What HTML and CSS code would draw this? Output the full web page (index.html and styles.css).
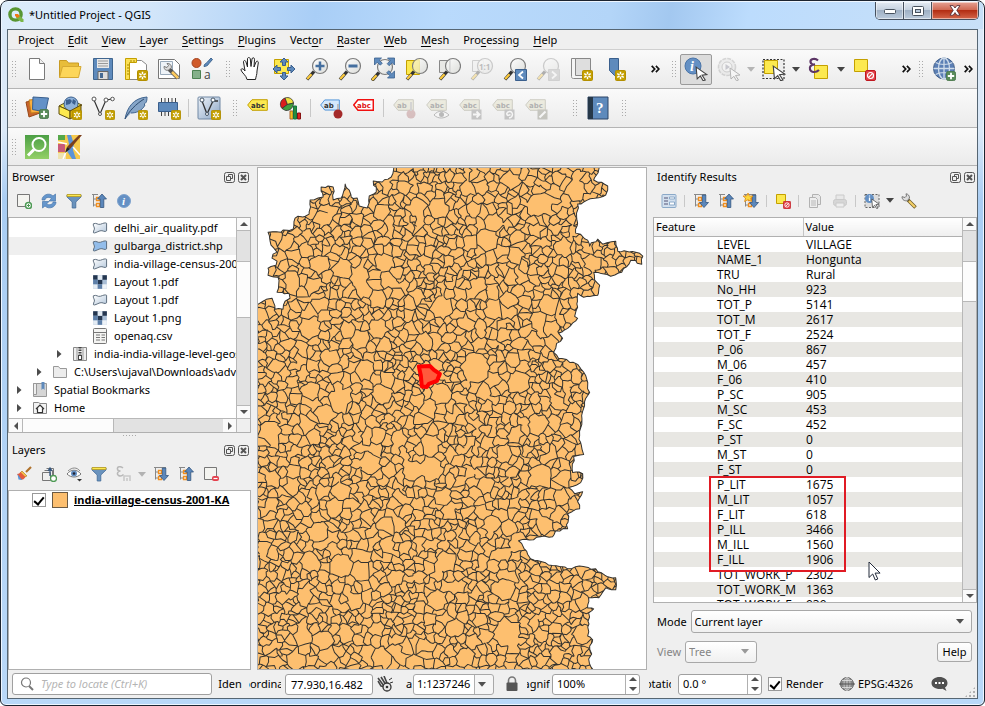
FILE: index.html
```html
<!DOCTYPE html>
<html lang="en">
<head>
<meta charset="utf-8">
<title>*Untitled Project - QGIS</title>
<link rel="stylesheet" href="styles.css">
</head>
<body>
<svg class="defs" aria-hidden="true">
  <defs>
    <linearGradient id="glass" x1="0" y1="0" x2="1" y2="1"><stop offset="0" stop-color="#fff"/><stop offset="1" stop-color="#d8d9d5"/></linearGradient>
    <linearGradient id="poly" x1="0" y1="0" x2="1" y2="1"><stop offset="0" stop-color="#fff"/><stop offset="1" stop-color="#b5c8dc"/></linearGradient>
    <linearGradient id="panel" x1="0" y1="0" x2="1" y2="1"><stop offset="0" stop-color="#eef3f9"/><stop offset="1" stop-color="#8ba6c6"/></linearGradient>
    <linearGradient id="green" x1="0" y1="0" x2="0" y2="1"><stop offset="0" stop-color="#4c9f45"/><stop offset="1" stop-color="#93d067"/></linearGradient>
  </defs>
  <symbol id="star" viewBox="0 0 11 11"><rect x=".5" y=".5" width="10" height="10" rx="1" fill="#c4a000" stroke="#b38f00"/><path d="M5.5 1.8v7.4M2.2 3.6l6.6 3.8M2.2 7.4l6.6-3.8" stroke="#fff" stroke-width="1.5"/><circle cx="5.500" cy="5.500" r="1.200" fill="#c4a000"/></symbol>
  <symbol id="plus" viewBox="0 0 11 11"><rect x=".5" y=".5" width="10" height="10" rx="2" fill="#5a8c5a" stroke="#48774a"/><path d="M5.500 2v7M2 5.500h7" stroke="#fff" stroke-width="2"/></symbol>
  <symbol id="mag" viewBox="0 0 24 24"><path d="M9 14.500L2 22.500" stroke="#333" stroke-width="3.400"/><path d="M6.500 17.200L2.200 22" stroke="#fcca3c" stroke-width="2.200"/><circle cx="15" cy="9" r="7.500" fill="url(#glass)" fill-opacity=".85" stroke="#7c7c7c" stroke-width="1.200"/></symbol>
  <symbol id="cursor" viewBox="0 0 12 14"><path d="M1 1l10 7-4.500.5 3 4.500-2 .8-2.600-4.500L2 12z" fill="#fff" stroke="#444" stroke-width="1"/></symbol>
  <symbol id="pointer" viewBox="0 0 13 20"><path d="M1 1v15.500l3.700-3.500 2.600 6 2.500-1-2.700-5.900h5z" fill="#fff" stroke="#222a3a"/></symbol>
  <symbol id="tag" viewBox="0 0 21 12"><path d="M.700 6L5 .700h15.300v10.600H5z"/></symbol>
  <symbol id="caret" viewBox="0 0 8 5"><path d="M0 0h8L4 4.800z" fill="currentColor"/></symbol>
  <symbol id="more" viewBox="0 0 9 8"><path d="M.700.800L3.700 4l-3 3.200M4.900.800L7.900 4l-3 3.200" fill="none" stroke="#111" stroke-width="1.700"/></symbol>
  <symbol id="float" viewBox="0 0 11 11"><rect x=".5" y=".5" width="10" height="10" rx="2" fill="none" stroke="#555"/><path d="M2.500 4.500h4v4h-4zM4.500 4V2.500h4v4H7" fill="none" stroke="#555"/></symbol>
  <symbol id="close" viewBox="0 0 11 11"><rect x=".5" y=".5" width="10" height="10" rx="2" fill="none" stroke="#555"/><path d="M3 3l5 5M8 3L3 8" stroke="#555" stroke-width="2"/></symbol>
  <symbol id="treeup" viewBox="0 0 16 16"><path d="M1 1.500h6M2.500 1.500v12M2.500 6H6M2.500 12H6" fill="none" stroke="#888"/><path d="M5.500 4.500h3v3h-3zM5.500 10.500h3v3h-3z" fill="none" stroke="#f28e1c" stroke-width="1.300"/><path d="M11 1l4.500 5h-2.700v8.500H9.300V6H6.500z" fill="#5b87bb" stroke="#34567e" stroke-width=".8"/></symbol>
  <symbol id="treedown" viewBox="0 0 16 16"><path d="M1 1.500h12M2.500 1.500v12M2.500 6H6M2.500 12H6" fill="none" stroke="#888"/><path d="M5.500 4.500h3v3h-3zM5.500 10.500h3v3h-3z" fill="none" stroke="#f28e1c" stroke-width="1.300"/><path d="M11 14.500L6.500 9.500h2.800V2h3.500v7.500h2.700z" fill="#5b87bb" stroke="#34567e" stroke-width=".8"/></symbol>
  <symbol id="filter" viewBox="0 0 16 16"><path d="M1 2h14v2L9.800 9v6H6.200V9L1 4z" fill="#6a93bd" stroke="#416a98" stroke-width=".8"/><path d="M1 1.500h14v2H1z" fill="#fce94f" stroke="#b89b20" stroke-width=".8"/></symbol>
  <symbol id="area" viewBox="0 0 17 13"><path d="M1.500 2C5 .500 6 3.500 9 2.500s5-2 6.500-1v8c-2 2-4-1-7 0s-6 3-7 2c0-3 1.500-3 1-5S1 4 1.500 2z" stroke="#586878" stroke-width="1"/></symbol>
  <symbol id="raster" viewBox="0 0 14 14"><path fill="#a9bed6" d="M1 1h12v12H1z"/><path fill="#24364f" d="M1 1h4v4H1zM9 1h4v4H9zM5 5h4v4H5z"/><path fill="#e4ecf4" d="M5 1h4v4H5zM1 9h4v4H1z"/><path fill="#5d7fa8" d="M1 5h4v4H1zM5 9h4v4H5z"/><path fill="#eef3f8" d="M9 9h4v4H9z"/></symbol>
  <symbol id="arrow" viewBox="0 0 5 8"><path d="M0 0l4.500 4L0 8z" fill="#4c4c4c"/></symbol>
  <symbol id="forbid" viewBox="0 0 11 11"><rect x=".5" y=".5" width="10" height="10" rx="1.500" fill="#e04048" stroke="#c01820"/><circle cx="5.500" cy="5.500" r="3" fill="none" stroke="#fff" stroke-width="1.200"/><path d="M3.400 7.600l4.200-4.200" stroke="#fff" stroke-width="1.200"/></symbol>
</svg>

<div class="window">
  <header class="titlebar">
    <svg class="logo" viewBox="0 0 16 16"><circle cx="7.500" cy="7.500" r="5.600" fill="none" stroke="#589632" stroke-width="3.400"/><path d="M8 8h3l4.500 4.500V15H13L8 10.500z" fill="#7ab648"/><path d="M7 7h3l1.800 2-2 2L7 9z" fill="#ee7913"/></svg>
    <h1>*Untitled Project - QGIS</h1>
    <div class="winbtns">
      <button aria-label="Minimize"><svg width="14" height="8" viewBox="0 0 14 8"><rect x="1.500" y="2.500" width="11" height="4" rx="1" fill="#fff" stroke="#48525e"/></svg></button>
      <button aria-label="Maximize"><svg width="12" height="10" viewBox="0 0 12 10"><rect x=".5" y=".5" width="11" height="9" rx="1" fill="#fff" stroke="#48525e"/><rect x="3.500" y="3.500" width="5" height="3" fill="#b8c8da" stroke="#48525e"/></svg></button>
      <button class="quit" aria-label="Close"><svg width="12" height="11" viewBox="0 0 12 11"><path d="M1 .600h3.200L6 3 7.800.600H11L7.800 5.300 11 10.200H7.800L6 7.600l-1.800 2.600H1l3.200-4.900z" fill="#fff" stroke="#5a3038" stroke-width=".9"/></svg></button>
    </div>
  </header>

  <div class="client">
    <nav class="menubar">
      <a href="#">Pro<u>j</u>ect</a><a href="#"><u>E</u>dit</a><a href="#"><u>V</u>iew</a><a href="#"><u>L</u>ayer</a><a href="#"><u>S</u>ettings</a><a href="#"><u>P</u>lugins</a><a href="#">Vect<u>o</u>r</a><a href="#"><u>R</u>aster</a><a href="#"><u>W</u>eb</a><a href="#"><u>M</u>esh</a><a href="#">Pro<u>c</u>essing</a><a href="#"><u>H</u>elp</a>
    </nav>

    <div class="toolbar">
      <i class="grip first"></i>
      <button aria-label="New"><svg viewBox="0 0 24 24"><path d="M4.500 1.500h10l5 5v16h-15z" fill="#fff" stroke="#7a7a7a"/><path d="M14.500 1.500v5h5" fill="#eee" stroke="#7a7a7a"/></svg></button>
      <button aria-label="Open"><svg viewBox="0 0 24 24"><path d="M1.500 20.500v-17h7l2 2.500h10v4" fill="#e8bd3a" stroke="#c99b22"/><path d="M1.500 20.500l3-11H23l-2.500 11z" fill="#fcd65a" stroke="#d6a932"/></svg></button>
      <button aria-label="Save"><svg viewBox="0 0 24 24"><path d="M2.500 1.500h19v21h-19z" fill="#5e8abc" stroke="#3f658f"/><path d="M6 2h12v9H6z" fill="#e8e8e8"/><path d="M7 4h10M7 6.500h10M7 9h10" stroke="#999"/><path d="M7 14.500h10v8H7z" fill="#ddd" stroke="#666"/><path d="M9 16h3v5H9z" fill="#456a94"/></svg></button>
      <button aria-label="New layout"><svg viewBox="0 0 24 24"><path d="M3.500 3.500h14l5 4v15h-19z" fill="#fff" stroke="#888"/><path d="M1.500 1.500h11v4h-7v17h-4z" fill="#fce055" stroke="#c4a000"/><path d="M3 8h2M3 11h2M3 14h2M3 17h2M7 3v2M10 3v2" stroke="#a58600"/><use href="#star" x="13" y="13" width="11" height="11"/></svg></button>
      <button aria-label="Layout manager"><svg viewBox="0 0 24 24"><path d="M1.500 2.500h16l5 5v14h-21z" fill="#fff" stroke="#777"/><path d="M3.500 4.500h12v13h-12z" fill="#eef3f8" stroke="#9ab"/><path d="M12 12l9 9" stroke="#555" stroke-width="4"/><path d="M15 15l6 6" stroke="#fcc95c" stroke-width="2.600"/><path d="M10 6.500l1.500 2-1.500 2-3-1c0 3 2 4.500 4.500 3.500l3-2.500C14.500 8 12.500 6 10 6.500z" fill="#ddd" stroke="#777"/></svg></button>
      <button aria-label="Style manager"><svg viewBox="0 0 24 24"><circle cx="6.500" cy="6" r="4.500" fill="#d05a2a" stroke="#a44420"/><path d="M14 9.500c0-2.500 2-3 3.500-4.500L21 1l1.500 1.500L19 6.500c-1 2-3 3-5 3z" fill="#5e8abc" stroke="#3f658f"/><path d="M2.500 13.500h8v8h-8z" fill="#84b08a" stroke="#4c8252"/><text x="14" y="21.500" class="ico-a">a</text></svg></button>
      <i class="grip"></i>
      <button aria-label="Pan"><svg viewBox="0 0 24 24"><path d="M8 22.500c-.5-4-5.500-7-6-9.500 0-2 2.500-1.500 4 1L4.500 5c0-2 2-2 2.500 0l1.500 5L8.500 2c0-2 2.500-2 2.800 0l.7 7.500 1-7.500c.3-1.800 2.500-1.600 2.500.3L15 10l2-5c.8-1.500 2.600-.8 2.300.8L18 14c0 4-1 5-1.500 8.500z" fill="#fff" stroke="#222" stroke-width="1"/></svg></button>
      <button aria-label="Pan to selection"><svg viewBox="0 0 24 24"><path d="M2.500 2.500h14v14h-14z" fill="#fce94f" stroke="#c4a000"/><path d="M12 1l4 4h-2.500v3.500h-3V5H8zM12 23l-4-4h2.500v-3.500h3V19H16zM1 12l4-4v2.500h3.500v3H5V16zM23 12l-4 4v-2.500h-3.500v-3H19V8z" fill="#5e8abc" stroke="#3a5f8d"/></svg></button>
      <button aria-label="Zoom in"><svg viewBox="0 0 24 24"><use href="#mag"/><path d="M15 4.500v9M10.500 9h9" stroke="#456f9f" stroke-width="2.500"/></svg></button>
      <button aria-label="Zoom out"><svg viewBox="0 0 24 24"><use href="#mag"/><path d="M10.500 9h9" stroke="#456f9f" stroke-width="2.800"/></svg></button>
      <button aria-label="Zoom full"><svg viewBox="0 0 24 24"><use href="#mag" x="-1" y="1"/><path d="M3.500 1h7L8.300 3.200l3 3-2 2-3-3L3.500 8zM23.500 1v7l-2.300-2.300-3 3-2-2 3-3L16.500 1zM23.500 21h-7l2.300-2.300-3-3 2-2 3 3 2.700-2.700z" fill="#5e8abc" stroke="#3a5f8d" stroke-width=".8"/></svg></button>
      <button aria-label="Zoom to selection"><svg viewBox="0 0 24 24"><path d="M2.500 3.500h13v14h-13z" fill="#fce94f" stroke="#c4a000"/><use href="#mag" x="1"/><path d="M10 4.500c2-2 4-2.500 6-2.500v14c-3 0-5-1-7-4z" fill="#fce94f" opacity=".35"/></svg></button>
      <button aria-label="Zoom to layer"><svg viewBox="0 0 24 24"><path d="M2.500 3.500h10v12h-10z" fill="#e8e8e5" stroke="#888"/><use href="#mag" x="1"/><path d="M13 3v12" stroke="#ccc"/></svg></button>
      <button class="off" aria-label="Zoom native"><svg viewBox="0 0 24 24"><path d="M2.500 3.500h11v11h-11z" fill="#eee" stroke="#888"/><use href="#mag"/><text x="9" y="12.500" class="ico-n">1:1</text></svg></button>
      <button aria-label="Zoom last"><svg viewBox="0 0 24 24"><use href="#mag"/><path d="M12.500 12.500h11v11h-11z" fill="#5e8abc" stroke="#3a5f8d"/><path d="M20 14.500L16 18l4 3.500" fill="none" stroke="#fff" stroke-width="1.800"/></svg></button>
      <button class="off" aria-label="Zoom next"><svg viewBox="0 0 24 24"><use href="#mag"/><path d="M12.500 12.500h11v11h-11z" fill="#aaa" stroke="#999"/><path d="M16 14.500l4 3.500-4 3.500" fill="none" stroke="#fff" stroke-width="1.800"/></svg></button>
      <button aria-label="New bookmark"><svg viewBox="0 0 24 24"><path d="M4.500 1.500h17v18h-17z" fill="#dedede" stroke="#888"/><path d="M2.500 1.500h4v17h13v3h-15c-1.500 0-2-1-2-2z" fill="#f4f4f4" stroke="#888"/><use href="#star" x="13" y="13" width="11" height="11"/></svg></button>
      <button aria-label="Show bookmarks"><svg viewBox="0 0 24 24"><path d="M7.500 1.500h9v18l-4-1-5-5z" fill="#5e8abc" stroke="#3a5f8d"/><use href="#star" x="13" y="13" width="11" height="11"/></svg></button>
      <span class="more push"><svg width="9" height="8"><use href="#more"/></svg></span>
      <i class="grip tight"></i>
      <button class="pressed" aria-label="Identify"><svg viewBox="0 0 24 24"><circle cx="9" cy="9" r="8" fill="#6490c4" stroke="#4a74a8"/><text x="6" y="14" class="ico-i">i</text><use href="#cursor" x="11" y="9" width="13" height="15"/></svg></button>
      <button class="off" aria-label="Run action"><svg viewBox="0 0 24 24"><circle cx="10" cy="10" r="8.500" fill="#ddd" stroke="#999" stroke-width="1.600" stroke-dasharray="4 1"/><circle cx="10" cy="10" r="5" fill="#f3f3f3" stroke="#888"/><path d="M8.500 7l4.500 3-4.500 3z" fill="#778"/><use href="#cursor" x="12" y="10" width="12" height="14"/></svg></button>
      <span class="drop off"><svg width="8" height="5"><use href="#caret"/></svg></span>
      <button aria-label="Select"><svg viewBox="0 0 24 24"><path d="M1 2.500h21v19H1z" fill="#eee" stroke="#333" stroke-dasharray="2 1.500" stroke-width="1.200"/><path d="M2.500 3.500h13v13h-13z" fill="#fce94f" stroke="#c4a000"/><use href="#cursor" x="10" y="8" width="14" height="16"/></svg></button>
      <span class="drop"><svg width="8" height="5"><use href="#caret"/></svg></span>
      <button aria-label="Select by expression"><svg viewBox="0 0 24 24"><path d="M7.500 8.500h13v13h-13z" fill="#fce94f" stroke="#c4a000"/><path d="M11 3.500C8 .5 3 2 3.500 5c.3 2 2.500 2.800 4.500 2.500C4 7.500 2 10 3 12.500c1 3 6 3.500 9 .5" fill="none" stroke="#5c3566" stroke-width="2.200"/></svg></button>
      <span class="drop"><svg width="8" height="5"><use href="#caret"/></svg></span>
      <button aria-label="Deselect"><svg viewBox="0 0 24 24"><path d="M2.500 2.500h13v12h-13z" fill="#fce94f" stroke="#c4a000"/><use href="#forbid" x="13" y="13" width="11" height="11"/></svg></button>
      <span class="more gap"><svg width="9" height="8"><use href="#more"/></svg></span>
      <i class="grip tight"></i>
      <button aria-label="Web services"><svg viewBox="0 0 24 24"><circle cx="12" cy="11.500" r="10.500" fill="#5b7fb5" stroke="#3e5c86"/><path d="M12 1v21M1.500 11.500h21M3.500 5.500c5 2.500 12 2.500 17 0M3.500 17.500c5-2.500 12-2.500 17 0" fill="none" stroke="#cfdcea" stroke-width="1.300"/><ellipse cx="12" cy="11.500" rx="5.500" ry="10.500" fill="none" stroke="#cfdcea" stroke-width="1.300"/><use href="#plus" x="14" y="14" width="10" height="10"/></svg></button>
      <span class="more last"><svg width="9" height="8"><use href="#more"/></svg></span>
    </div>

    <div class="toolbar">
      <i class="grip first"></i>
      <button aria-label="Data source manager"><svg viewBox="0 0 24 24"><path d="M1 6l11-2 3 13-11 4z" fill="#c8642c" stroke="#984818"/><path d="M4 4l11-1 2 13-11 1z" fill="#fcaf3e" stroke="#c47e1c"/><path d="M8 1l15.500 1-3 14-13-2.500z" fill="#6391c7" stroke="#3a5f8d"/><use href="#plus" x="14" y="13" width="10" height="10"/></svg></button>
      <button aria-label="New geopackage"><svg viewBox="0 0 24 24"><path d="M1 10l11-6 12 5-12 6z" fill="#fce94f" stroke="#5c4c10"/><circle cx="13" cy="8" r="7" fill="#8fb2da" stroke="#3a5f8d"/><path d="M8 4l4-1 2 2-2 3-4 1zM15 3l3 2-1 4-3-2z" fill="#3c6090"/><path d="M1 10l11 5v8L1 18z" fill="#fce94f" stroke="#5c4c10"/><path d="M12 15l11-6v8l-11 6z" fill="#d3a90c" stroke="#5c4c10"/><use href="#star" x="14" y="14" width="10" height="10"/></svg></button>
      <button aria-label="New shapefile"><svg viewBox="0 0 24 24"><path d="M3 4l6 14 6-14 6-1" fill="none" stroke="#333" stroke-width="1.200"/><circle cx="3" cy="3" r="2" fill="#fff" stroke="#555"/><circle cx="9" cy="18" r="1.500" fill="#fff" stroke="#555"/><circle cx="15" cy="4" r="2" fill="#fff" stroke="#555"/><circle cx="21.500" cy="3" r="1.800" fill="#fff" stroke="#555"/><use href="#star" x="14" y="14" width="10" height="10"/></svg></button>
      <button aria-label="New spatialite"><svg viewBox="0 0 24 24"><path d="M1 23C3 12 9 2 23 1c0 5-1 6-3 7l1 1c-3 6-9 8-14 8" fill="#86a5c8" stroke="#41658f"/><path d="M1 23C5 15 12 8 20 3" fill="none" stroke="#2f4d70"/><use href="#star" x="14" y="14" width="10" height="10"/></svg></button>
      <button aria-label="New scratch layer"><svg viewBox="0 0 24 24"><path d="M4.500 2v18M8 2v18M11.500 2v18M15 2v18M18.500 2v18" stroke="#444"/><path d="M1.500 6.500h19v9h-19z" fill="#5e8abc" stroke="#3a5f8d"/><use href="#star" x="14" y="14" width="10" height="10"/></svg></button>
      <i class="sep"></i>
      <button aria-label="New virtual layer"><svg viewBox="0 0 24 24"><rect x="1" y="1" width="22" height="22" rx="1" fill="url(#panel)" stroke="#7088a4"/><path d="M5 5l5 13 6-13h5" fill="none" stroke="#333" stroke-width="1.300"/><circle cx="5" cy="4" r="2" fill="#fff" stroke="#456"/><circle cx="16" cy="4" r="2" fill="#fff" stroke="#456"/><circle cx="10" cy="18" r="1.500" fill="#fff" stroke="#456"/><use href="#star" x="14" y="14" width="10" height="10"/></svg></button>
      <i class="grip"></i>
      <button aria-label="Labels"><svg viewBox="0 0 24 24"><use href="#tag" class="t-yel" x="1" y="3" width="21" height="12"/><text x="5" y="12" class="ico-abc">abc</text></svg></button>
      <button aria-label="Diagrams"><svg viewBox="0 0 24 24"><path d="M8.500 8.500L3 12.500A6.500 6.500 0 0 1 6 2z" fill="#d81e1e" stroke="#333" stroke-width=".8"/><path d="M8.500 8.500L6 2c4-1.500 8 1 8.500 5z" fill="#f0e040" stroke="#333" stroke-width=".8"/><path d="M8.500 8.500l6-1.500c0 4-3 8-8 7.500L3 12.500z" fill="#3f9f3f" stroke="#333" stroke-width=".8"/><path d="M11 15h3v8h-3z" fill="#f0c41c" stroke="#a63"/><path d="M14.500 10h3v13h-3z" fill="#2b8c3c" stroke="#174"/><path d="M18.500 17h3v6h-3z" fill="#d22" stroke="#811"/></svg></button>
      <i class="sep"></i>
      <button aria-label="Pin labels"><svg viewBox="0 0 24 24"><use href="#tag" class="t-blu" x="1" y="3" width="20" height="12"/><text x="5" y="12" class="ico-abc">ab</text><path d="M19 8v9" stroke="#bbb" stroke-width="2"/><circle cx="19" cy="18" r="4.500" fill="#a42a2a"/></svg></button>
      <button aria-label="Unplaced labels"><svg viewBox="0 0 24 24"><use href="#tag" class="t-red" x="1" y="3" width="21" height="12"/><text x="5" y="12" class="ico-abc red">abc</text></svg></button>
      <i class="sep"></i>
      <button class="off" aria-label="Pin"><svg viewBox="0 0 24 24"><use href="#tag" class="t-off" x="1" y="3" width="21" height="12"/><text x="5" y="12" class="ico-abc">ab</text><circle cx="19" cy="18" r="4.500" fill="#a66"/><path d="M19 6v9" stroke="#999" stroke-width="2"/></svg></button>
      <button class="off" aria-label="Show labels"><svg viewBox="0 0 24 24"><use href="#tag" class="t-off" x="1" y="3" width="21" height="12"/><text x="5" y="12" class="ico-abc">abc</text><path d="M9 19c4-5 10-5 15 0-5 4-11 4-15 0z" fill="#fff" stroke="#555"/><circle cx="16.500" cy="18.500" r="2.500" fill="#555"/></svg></button>
      <button class="off" aria-label="Move label"><svg viewBox="0 0 24 24"><use href="#tag" class="t-off" x="1" y="3" width="21" height="12"/><text x="5" y="12" class="ico-abc">abc</text><path d="M13.500 13.500h10v10h-10z" fill="#777"/><path d="M15 18.500h6M18.500 15.500l3 3-3 3" fill="none" stroke="#fff" stroke-width="1.800"/></svg></button>
      <button class="off" aria-label="Rotate label"><svg viewBox="0 0 24 24"><use href="#tag" class="t-off" x="1" y="3" width="21" height="12"/><text x="5" y="12" class="ico-abc">abc</text><path d="M13.500 13.500h10v10h-10z" fill="#777"/><path d="M18 22c5-1 4-7 .5-6.500-3 .5-3.500 3-1.500 4l2.500-1" fill="none" stroke="#fff" stroke-width="1.500"/></svg></button>
      <button class="off" aria-label="Change label"><svg viewBox="0 0 24 24"><use href="#tag" class="t-off" x="1" y="3" width="21" height="12"/><text x="5" y="12" class="ico-abc">abc</text><path d="M13.500 13.500h10v10h-10z" fill="#776"/><path d="M15.500 21.500l6-6" stroke="#fff" stroke-width="2.200"/></svg></button>
      <i class="grip wide"></i>
      <button aria-label="Help contents"><svg viewBox="0 0 24 24"><path d="M2 1h20v22H2z" fill="#5e8abc" stroke="#2c4466"/><path d="M2 1h5v22H2z" fill="#263849"/><text x="10" y="17" class="ico-q">?</text></svg></button>
      <i class="grip"></i>
    </div>

    <div class="toolbar short">
      <i class="grip first"></i>
      <button aria-label="Search"><svg viewBox="0 0 24 24"><path d="M0 0h24v24H0z" fill="url(#green)"/><circle cx="14" cy="9.500" r="6.500" fill="none" stroke="#fff" stroke-width="2"/><path d="M9 14.500L3 20.500" stroke="#fff" stroke-width="3"/></svg></button>
      <button aria-label="Map editor"><svg viewBox="0 0 24 24"><path d="M0 0h22v24H0z" fill="#f6c94c"/><path d="M0 0h7v5H0z" fill="#56a84a"/><path d="M0 9h7v8H0z" fill="#c85a78"/><path d="M9 0l2 9-2 7 5 8h4l-3-9 1-6-3-9z" fill="#5b94d8"/><path d="M0 18h8v6H0z" fill="#efe3b0"/><path d="M0 7l9 2M8 17l-3 7M15 12l7 8" stroke="#fff" stroke-width="1.500"/><path d="M24 0L12 14l-3-2L21 0z" fill="#7c3f1c"/><path d="M12 14l-5 4 2-6z" fill="#222"/></svg></button>
    </div>

    <main class="work">
      <aside class="dock left">
        <section class="browser">
          <div class="dock-title"><h2>Browser</h2><button aria-label="Float"><svg><use href="#float"/></svg></button><button aria-label="Close panel"><svg><use href="#close"/></svg></button></div>
          <div class="tools">
            <button aria-label="Add layers"><svg viewBox="0 0 16 16"><path d="M1.500 1.500h12v12h-12z" fill="#f4f4f0" stroke="#777"/><circle cx="12.500" cy="12.500" r="3" fill="#fff" stroke="#4e9a55" stroke-width="1.500"/><path d="M12.500 11v3M11 12.500h3" stroke="#4e9a55"/></svg></button>
            <button aria-label="Refresh"><svg viewBox="0 0 16 16"><path d="M1 7c0-5 7-8 11-4l2.500-2V8H8l2.500-2.500C8 3.500 4 4.500 4 7zM15 9c0 5-7 8-11 4l-2.500 2V8.500H8L5.500 11C8 12.500 12 11.500 12 9z" fill="#6596cc" stroke="#4a78ac" stroke-width=".7"/></svg></button>
            <button aria-label="Filter"><svg><use href="#filter"/></svg></button>
            <button aria-label="Collapse all"><svg><use href="#treeup"/></svg></button>
            <button aria-label="Properties"><svg viewBox="0 0 16 16"><circle cx="8" cy="8" r="6.500" fill="#6490c4" stroke="#7fa3cd"/><text x="6" y="12" class="ico-is">i</text></svg></button>
          </div>
          <div class="treebox">
            <ul class="tree">
              <li class="l4"><i></i><svg class="ar"><use href="#area"/></svg>delhi_air_quality.pdf</li>
              <li class="l4 hover"><i></i><svg class="ar blue"><use href="#area"/></svg>gulbarga_district.shp</li>
              <li class="l4"><i></i><svg class="ar"><use href="#area"/></svg>india-village-census-2001-KA</li>
              <li class="l4"><i></i><svg><use href="#raster"/></svg>Layout 1.pdf</li>
              <li class="l4"><i></i><svg class="ar"><use href="#area"/></svg>Layout 1.pdf</li>
              <li class="l4"><i></i><svg><use href="#raster"/></svg>Layout 1.png</li>
              <li class="l4"><i></i><svg viewBox="0 0 16 16"><rect x="1.500" y=".5" width="13" height="15" rx="1" fill="#f4f4f2" stroke="#777"/><path d="M1.500 4.500h13M4 7h4M9.500 7H13M4 9.500h4M9.500 9.500H13M4 12h4M9.500 12H13" stroke="#777"/></svg>openaq.csv</li>
              <li class="l3"><i><svg width="5" height="8"><use href="#arrow"/></svg></i><svg viewBox="0 0 16 16"><path d="M1.500 1.500h13v13h-13z" fill="#eee" stroke="#888"/><path d="M5 1v14M11 1v14" stroke="#999"/><path d="M8 1v9" stroke="#444" stroke-width="3" stroke-dasharray="1.500 1"/><rect x="6.500" y="9.500" width="3" height="4" fill="#fff" stroke="#444"/></svg>india-india-village-level-geospatial</li>
              <li class="l2"><i><svg width="5" height="8"><use href="#arrow"/></svg></i><svg viewBox="0 0 16 16"><path d="M1.500 13.500v-11h5l1.500 2h6.500v9z" fill="#ececec" stroke="#999"/></svg>C:\Users\ujaval\Downloads\advanced</li>
              <li class="l1"><i><svg width="5" height="8"><use href="#arrow"/></svg></i><svg viewBox="0 0 16 16"><path d="M1.500 1.500h13v13h-13z" fill="#d6d6d6" stroke="#999"/><path d="M1.500 1.500h3v11h-3z" fill="#eee" stroke="#999"/><path d="M9.500 0h3v8L11 6.500 9.500 8z" fill="#5e8abc"/></svg>Spatial Bookmarks</li>
              <li class="l1"><i><svg width="5" height="8"><use href="#arrow"/></svg></i><svg viewBox="0 0 16 16"><path d="M1.500 13.500v-11h5l1.500 1h6.500v10z" fill="#f2f2f2" stroke="#888"/><path d="M4 9l4-4 4 4M5.500 8.500v4h5v-4" fill="#fff" stroke="#333" stroke-width="1.200"/></svg>Home</li>
            </ul>
            <div class="vbar"><b class="up"></b><span class="track"></span><span class="thumb"></span><span class="track grow"></span><b class="down"></b></div>
            <div class="hbar"><b class="lt"></b><span class="thumb"></span><span class="track grow"></span><b class="rt"></b></div>
            <div class="corner"></div>
          </div>
        </section>
        <i class="split"></i>
        <section class="layers">
          <div class="dock-title"><h2>Layers</h2><button aria-label="Float"><svg><use href="#float"/></svg></button><button aria-label="Close panel"><svg><use href="#close"/></svg></button></div>
          <div class="tools">
            <button aria-label="Styling"><svg viewBox="0 0 16 16"><path d="M15 1l-5 5" stroke="#b0722c" stroke-width="2.200"/><path d="M6 5l5 5-3 1-4-4z" fill="#f5c24c" stroke="#b8822a" stroke-width=".7"/><path d="M4.500 6l5 5c-2 3-4 3-5 2.500L1 8C3 8 3.500 7 4.500 6z" fill="#e45a3c"/><path d="M1.500 8l3 4 2 2-4-.500z" fill="#5b94d8"/></svg></button>
            <button aria-label="Add group"><svg viewBox="0 0 16 16"><path d="M1.500 6.500h8v8h-8zM3.500 4.500h8v8M5.500 2.500h7v8" fill="none" stroke="#777"/><path d="M9 10V3M7 5l2-3 2 3" fill="none" stroke="#34567e" stroke-width="1.300"/><circle cx="12.500" cy="12.500" r="3" fill="#fff" stroke="#4e9a55" stroke-width="1.300"/></svg></button>
            <button aria-label="Map themes"><svg viewBox="0 0 16 16"><path d="M1 8c4-5 10-5 14 0-4 4-10 4-14 0z" fill="#fff" stroke="#777"/><circle cx="8" cy="7.500" r="3" fill="#6490c4"/><circle cx="8" cy="7.500" r="1.300" fill="#223"/><path d="M2 5c4-4 9-4 12 0" fill="none" stroke="#888"/><path d="M11 13h5l-2.500 2.500z" fill="#333"/></svg></button>
            <button aria-label="Filter legend"><svg><use href="#filter"/></svg></button>
            <button class="off" aria-label="Filter by expression"><svg viewBox="0 0 16 16"><path d="M7 2C4-.500 1 1 1.500 3c0 1.500 2 2 3 2-3 0-4 3-2 4.500 2 1 4 0 5-1" fill="none" stroke="#555" stroke-width="1.500"/><path d="M8 15v-5h6v5M11 15v-3" fill="none" stroke="#888" stroke-width="1.600"/></svg></button>
            <span class="drop off"><svg width="8" height="5"><use href="#caret"/></svg></span>
            <button aria-label="Expand all"><svg><use href="#treedown"/></svg></button>
            <button aria-label="Collapse all"><svg><use href="#treeup"/></svg></button>
            <button aria-label="Remove"><svg viewBox="0 0 16 16"><path d="M1.500 1.500h12v12h-12z" fill="#f4f4f0" stroke="#777"/><rect x="9" y="10" width="7" height="5" rx="2" fill="#e4404c"/><path d="M10.500 12.500h4" stroke="#fff" stroke-width="1.200"/></svg></button>
          </div>
          <div class="layerbox"><label><input type="checkbox" checked><i class="swatch"></i><span>india-village-census-2001-KA</span></label></div>
        </section>
      </aside>

      <div class="map"><svg id="map" viewBox="258 168 388 500" preserveAspectRatio="xMinYMin slice" role="img" aria-label="Village boundaries"></svg></div>

      <aside class="dock right">
        <div class="dock-title"><h2>Identify Results</h2><button aria-label="Float"><svg><use href="#float"/></svg></button><button aria-label="Close panel"><svg><use href="#close"/></svg></button></div>
        <div class="tools">
          <button aria-label="Form view"><svg viewBox="0 0 16 16"><rect x="1" y="1.500" width="14" height="13" rx="1" fill="#d3e0ee" stroke="#8ba9c8"/><path d="M3 5h4M3 8h4M3 11h4" stroke="#557"/><path d="M8.500 4h5v2h-5zM8.500 9h5v3h-5z" fill="#fff" stroke="#8ba9c8"/></svg></button>
          <i class="sep"></i>
          <button aria-label="Expand tree"><svg><use href="#treedown"/></svg></button>
          <button aria-label="Collapse tree"><svg><use href="#treeup"/></svg></button>
          <button aria-label="Expand new results"><svg viewBox="0 0 16 16"><use href="#treedown"/><path d="M5 0l1.400 3H10L7.500 5.200l1 3.300L5 6.700 1.500 8.500l1-3.300L0 3h3.600z" fill="#fcd83c" stroke="#e08c1c" stroke-width=".8"/></svg></button>
          <i class="sep"></i>
          <button aria-label="Clear results"><svg viewBox="0 0 16 16"><path d="M1.500 1.500h9v9h-9z" fill="#fce94f" stroke="#c4a000"/><use href="#forbid" x="8" y="8" width="8" height="8"/></svg></button>
          <i class="sep"></i>
          <button class="off" aria-label="Copy"><svg viewBox="0 0 16 16"><path d="M5.500 1.500h6l2 2v8h-8z" fill="#ddd" stroke="#444"/><path d="M2.500 4.500h6l2 2v8h-8z" fill="#eee" stroke="#444"/><path d="M4 8h5M4 10h5M4 12h5" stroke="#555"/></svg></button>
          <button class="off" aria-label="Print"><svg viewBox="0 0 16 16"><path d="M4 2h8v5H4z" fill="#ddd" stroke="#888"/><rect x="1.500" y="6.500" width="13" height="6" rx="2" fill="#aaa" stroke="#888"/><path d="M4 10h8v4H4z" fill="#eee" stroke="#888"/></svg></button>
          <i class="sep"></i>
          <button aria-label="Identify mode"><svg viewBox="0 0 16 16"><path d="M1 1.500h14v13H1z" fill="#ddd" stroke="#666" stroke-dasharray="2 1.500"/><circle cx="5.500" cy="5.500" r="4.500" fill="#6490c4"/><path d="M5.500 4.500V8M5.500 2.500v1" stroke="#fff" stroke-width="1.300"/><use href="#cursor" x="7" y="5" width="9" height="11"/></svg></button>
          <span class="drop"><svg width="8" height="5"><use href="#caret"/></svg></span>
          <button aria-label="Settings"><svg viewBox="0 0 16 16"><path d="M7 7l7.500 7.500" stroke="#6b5a28" stroke-width="3.600"/><path d="M8 8l6 6" stroke="#f3cf67" stroke-width="2.200"/><path d="M5 .800L5.500 3 4 4.500l-3-.8C1 7 4 8.500 6.500 7.500L8.500 5C8.500 2.500 7 1 5 .800z" fill="#ddd" stroke="#777"/></svg></button>
        </div>
        <div class="results">
          <div class="tablebox">
            <table>
              <thead><tr><th>Feature</th><th>Value</th></tr></thead>
              <tbody>
                <tr><td>LEVEL</td><td>VILLAGE</td></tr>
                <tr><td>NAME_1</td><td>Hongunta</td></tr>
                <tr><td>TRU</td><td>Rural</td></tr>
                <tr><td>No_HH</td><td>923</td></tr>
                <tr><td>TOT_P</td><td>5141</td></tr>
                <tr><td>TOT_M</td><td>2617</td></tr>
                <tr><td>TOT_F</td><td>2524</td></tr>
                <tr><td>P_06</td><td>867</td></tr>
                <tr><td>M_06</td><td>457</td></tr>
                <tr><td>F_06</td><td>410</td></tr>
                <tr><td>P_SC</td><td>905</td></tr>
                <tr><td>M_SC</td><td>453</td></tr>
                <tr><td>F_SC</td><td>452</td></tr>
                <tr><td>P_ST</td><td>0</td></tr>
                <tr><td>M_ST</td><td>0</td></tr>
                <tr><td>F_ST</td><td>0</td></tr>
                <tr><td>P_LIT</td><td>1675</td></tr>
                <tr><td>M_LIT</td><td>1057</td></tr>
                <tr><td>F_LIT</td><td>618</td></tr>
                <tr><td>P_ILL</td><td>3466</td></tr>
                <tr><td>M_ILL</td><td>1560</td></tr>
                <tr><td>F_ILL</td><td>1906</td></tr>
                <tr><td>TOT_WORK_P</td><td>2302</td></tr>
                <tr><td>TOT_WORK_M</td><td>1363</td></tr>
                <tr><td>TOT_WORK_F</td><td>939</td></tr>
              </tbody>
            </table>
            <div class="callout"></div>
            <svg class="mouse"><use href="#pointer"/></svg>
          </div>
          <div class="vbar"><b class="up"></b><span class="track"></span><span class="thumb"></span><span class="track grow"></span><b class="down"></b></div>
        </div>
        <div class="form">
          <label for="mode">Mode</label>
          <span class="combo full"><select id="mode"><option>Current layer</option></select><svg><use href="#caret"/></svg></span>
        </div>
        <div class="form second">
          <label class="dim" for="view">View</label>
          <span class="combo small"><select id="view" disabled><option>Tree</option></select><svg><use href="#caret"/></svg></span>
          <button class="help">Help</button>
        </div>
      </aside>
    </main>

    <footer class="status">
      <div class="locator"><svg viewBox="0 0 14 14"><circle cx="6" cy="5.500" r="4.500" fill="none" stroke="#777" stroke-width="1.200"/><path d="M9 9l4 4" stroke="#777" stroke-width="2"/></svg><input type="text" aria-label="Locator" placeholder="Type to locate (Ctrl+K)"></div>
      <span class="clip w-iden">Iden</span>
      <label class="clip w-coord" for="coord">Coordinate</label>
      <input class="box coord" id="coord" value="77.930,16.482">
      <svg class="extent" viewBox="0 0 16 16"><path d="M1 2l6 8M4 1l5 8M7 0l3 7" stroke="#444" stroke-width="1.600"/><path d="M1 5l3 5 5 1" fill="none" stroke="#444" stroke-width="1.500"/><circle cx="10" cy="11" r="4" fill="#e8e8e8" stroke="#333" stroke-width="1.300"/><circle cx="10" cy="11" r="1.300" fill="#333"/><path d="M12 4l3-2M13 7l3-1" stroke="#333"/></svg>
      <label class="clip w-scale" for="scale">a</label>
      <span class="combo scale"><select id="scale"><option>1:1237246</option></select><svg><use href="#caret"/></svg></span>
      <svg class="lock" viewBox="0 0 12 16"><path d="M2.500 8V4.500a3.500 3.500 0 0 1 7 0V8" fill="none" stroke="#777" stroke-width="1.600"/><rect x=".5" y="6.500" width="11" height="8.500" rx="1" fill="#555"/></svg>
      <label class="clip w-mag" for="magn">Magnifier</label>
      <span class="spin magn"><input id="magn" value="100%"><span><b class="up"></b><b class="down"></b></span></span>
      <label class="clip w-rot" for="rot">Rotation</label>
      <span class="spin rot"><input id="rot" value="0.0 °"><span><b class="up"></b><b class="down"></b></span></span>
      <label class="render"><input type="checkbox" checked>Render</label>
      <button class="crs"><svg viewBox="0 0 16 16"><circle cx="8" cy="8" r="6.500" fill="#8a8a8a" stroke="#666"/><path d="M8 1.500v13M3 4.500h10M3 11.500h10" stroke="#e4e4e4" stroke-width=".8"/><ellipse cx="8" cy="8" rx="3" ry="6.500" fill="none" stroke="#d4d4d4" stroke-width=".8"/><path d="M0 8h16" stroke="#555"/></svg>EPSG:4326</button>
      <button class="bubble" aria-label="Messages"><svg viewBox="0 0 17 16"><path d="M8.500 1C13 1 16.500 3.500 16.500 7c0 2-1 3.500-2.500 4.500l1.500 3.500-4-2.200C5 13.800.500 11 .500 7c0-3.500 3.500-6 8-6z" fill="#505050"/><path d="M4 6h2v2H4zM7.500 6h2v2h-2zM11 6h2v2h-2z" fill="#fff"/></svg></button>
      <i class="sizegrip"></i>
    </footer>
  </div>
</div>
<script src="map.js"></script>
</body>
</html>
```
FILE: styles.css
```css
* { box-sizing: border-box; }
html { background: #fff; }
body { margin: 0; font: 11px/16px "Noto Sans", "Open Sans", sans-serif; color: #000; }
button, input, select { font: inherit; color: inherit; margin: 0; }
button { border: 0; padding: 0; background: none; }
h1, h2 { margin: 0; font-size: 11px; font-weight: 400; }
.defs { position: absolute; width: 0; height: 0; }

.window {
  display: flex; flex-direction: column; height: 100vh; padding: 0 6px 6px;
  border: 1px solid #1c2430; border-radius: 8px 8px 6px 6px; overflow: hidden;
  background: linear-gradient(#dbe9f8, #dbe9f8 130px, #a9cdf3 200px, #b9d8f8);
  box-shadow: inset 0 0 0 1px #eef6ff;
}
.titlebar {
  display: flex; align-items: center; flex: none; height: 27px; margin: 1px -5px 0; padding: 0 0 2px 6px;
  background: linear-gradient(100deg, #dcecfb 0, #d3e6fa 15%, #a9cef6 32%, #b9dafc 45%, #b3d5f8 62%, #a3c8f0 68%, #bcdcfd 76%, #c8e0f8 100%);
}
.logo { width: 16px; height: 16px; margin-right: 5px; }
.winbtns { display: flex; align-self: flex-start; margin-left: auto; margin-right: 4px; border: 1px solid #46505e; border-top: 0; border-radius: 0 0 5px 5px; overflow: hidden; }
.winbtns button { display: grid; place-items: center; width: 28px; height: 17px; border-right: 1px solid #46505e; background: linear-gradient(#e4ebf3 0, #c4d0de 48%, #9fb0c4 50%, #bccbdc); box-shadow: inset 0 0 0 1px #ffffff80; }
.winbtns .quit { width: 46px; border: 0; background: linear-gradient(#e6a294 0, #cf6650 48%, #b32e14 50%, #d4664a); }

.client { display: flex; flex-direction: column; flex: 1; min-height: 0; border: 1px solid #566673; background: #efefef; }
.menubar { display: flex; flex: none; height: 20px; padding-left: 10px; gap: 14px; border-bottom: 1px solid #cfcfcf; background: #efefef; line-height: 19px; }
.menubar a { color: #000; text-decoration: none; }
.menubar u { text-underline-offset: 2px; }

.toolbar { display: flex; align-items: center; flex: none; height: 39px; border-bottom: 1px solid #b4b4b4; background: linear-gradient(#fafafa, #ebebeb); }
.toolbar.short { height: 38px; }
.toolbar button { display: grid; place-items: center; flex: none; width: 33px; height: 32px; }
.toolbar button svg { width: 24px; height: 24px; }
.toolbar .pressed { width: 32px; height: 31px; border: 1px solid #9a9a9a; border-radius: 2px; background: #dcdcdc; }
.grip { flex: none; width: 5px; height: 18px; margin: 0 4px 0 7px; background: radial-gradient(circle, #aaa 0 0.600px, transparent 1px) 0 0 / 3px 3px; }
.grip.first { margin-left: 3px; }
.grip.tight { margin-left: 3px; }
.grip.wide { margin-left: 20px; }
.sep { flex: none; width: 1px; height: 18px; margin: 0 3px; background: #c8c8c8; }
.off svg { opacity: .35; }
.more { display: grid; place-items: center; flex: none; width: 17px; }
.more.push { margin-left: auto; margin-right: 4px; }
.more.gap { margin-left: 18px; }
.drop { display: grid; place-items: center; flex: none; width: 12px; color: #444; }

.work { display: flex; flex: 1; min-height: 0; }
.dock { display: flex; flex-direction: column; flex: none; }
.left { width: 243px; }
.right { width: 324px; }
.dock-title { display: flex; align-items: center; flex: none; height: 22px; padding: 0 2px 0 4px; gap: 3px; }
.dock-title h2 { flex: 1; }
.dock-title button, .dock-title svg { display: block; width: 11px; height: 11px; }
.tools { display: flex; align-items: center; flex: none; height: 29px; padding: 0 0 4px 3px; }
.tools button { display: grid; place-items: center; width: 25px; height: 22px; }
.tools button > svg { width: 16px; height: 16px; }
.right .tools .sep { height: 12px; }
.tools .drop { width: 12px; }

.browser { display: flex; flex-direction: column; flex: 0 0 267px; }
.treebox { display: grid; grid-template: minmax(0, 1fr) 14px / minmax(0, 1fr) 14px; flex: 1; min-height: 0; border: 1px solid #b0b0b0; background: #fff; }
.tree { margin: 0; padding: 1px 0 0; list-style: none; overflow: hidden; }
.tree li { display: flex; align-items: center; height: 18px; white-space: nowrap; }
.tree li > i { display: grid; place-items: center; flex: none; width: 12px; margin-right: 7px; }
.tree li > svg { flex: none; width: 16px; height: 16px; margin-right: 6px; fill: url(#poly); }
.tree li > .blue { fill: #93bdea; }
.tree .hover { background: #efefef; }
.l1 { padding-left: 4px; }
.l2 { padding-left: 24px; }
.l3 { padding-left: 44px; }
.l4 { padding-left: 64px; }

.vbar { display: flex; flex-direction: column; border-left: 1px solid #b8b8b8; }
.hbar { display: flex; border-top: 1px solid #b8b8b8; }
.corner { border: solid #b8b8b8; border-width: 1px 0 0 1px; background: #efefef; }
.vbar b, .hbar b { display: grid; place-items: center; flex: none; width: 13px; height: 13px; background: #fafafa; }
.vbar b::before, .hbar b::before, .spin b::before { content: ""; border: 4px solid transparent; }
.vbar .up::before, .spin .up::before { border-bottom-color: #505050; border-top: 0; }
.vbar .down::before, .spin .down::before { border-top-color: #505050; border-bottom: 0; }
.hbar .lt::before { border-right-color: #505050; border-left: 0; }
.hbar .rt::before { border-left-color: #505050; border-right: 0; }
.track { height: 30px; background: #e2e2e2; }
.track.grow { flex: 1; height: auto; }
.vbar .thumb { height: 57px; border: solid #b8b8b8; border-width: 1px 0; background: #fcfcfc; }
.hbar .thumb { width: 92px; border: solid #b8b8b8; border-width: 0 1px; background: #fcfcfc; }
.vbar.vbar .up { border-bottom: 1px solid #b8b8b8; }
.vbar.vbar .down { border-top: 1px solid #b8b8b8; }
.results .vbar .thumb { height: 41px; }

.split { flex: none; width: 16px; height: 3px; margin: 1px auto 2px; background: radial-gradient(circle, #aaa 0 0.600px, transparent 1px) 0 0 / 3px 3px; }
.layers { display: flex; flex-direction: column; flex: 1; min-height: 0; }
.layers .tools { padding-bottom: 3px; }
.layerbox { flex: 1; padding: 0 0 0 23px; border: 1px solid #b0b0b0; background: #fff; }
.layerbox label { display: flex; align-items: center; height: 18px; white-space: nowrap; }
.layerbox span { font-weight: 700; text-decoration: underline; }
.swatch { width: 16px; height: 16px; margin: 0 6px; border: 1px solid #6b5a44; background: #fdbf6f; }
input[type="checkbox"] { appearance: none; display: grid; place-items: center; flex: none; width: 14px; height: 14px; border: 1px solid #999; background: #fff; }
input[type="checkbox"]:checked::before { content: ""; width: 4px; height: 8px; border: solid #000; border-width: 0 2px 2px 0; transform: rotate(40deg); }

.map { flex: 1; min-width: 0; margin: 1px 6px 0; border: 1px solid #b0b0b0; background: #fff; overflow: hidden; }
.map svg { display: block; width: 100%; height: 100%; }
.land { fill: #fdbf6f; }
.cells { fill: none; stroke: #33322f; stroke-width: 1; stroke-linejoin: round; }
.picked { fill: #ff5a3c; stroke: #f00; stroke-width: 4; stroke-linejoin: round; }

.results { display: flex; flex: 1; min-height: 0; border: 1px solid #b0b0b0; background: #fff; }
.tablebox { position: relative; flex: 1; overflow: hidden; }
.results .vbar { width: 14px; }
table { width: 100%; border-collapse: collapse; table-layout: fixed; }
th { height: 18px; padding: 0 0 0 2px; font-weight: 400; text-align: left; line-height: 17px; border-bottom: 1px solid #b0b0b0; background: linear-gradient(#fff, #efefef); }
th:first-child { width: 149px; border-right: 1px solid #c4c4c4; }
td { height: 15px; padding: 0 0 0 3px; font: 12px/15px "Open Sans", "Noto Sans", sans-serif; white-space: nowrap; }
td:first-child { padding-left: 63px; }
tbody tr:nth-child(even) { background: #e8e7e3; }
.callout { position: absolute; top: 258px; left: 55px; width: 137px; height: 96px; border: 2px solid #e01b24; }
.mouse { position: absolute; top: 343px; left: 214px; width: 13px; height: 20px; }

.form { display: flex; align-items: center; flex: none; height: 37px; padding: 0 5px 0 4px; gap: 4px; }
.form.second { height: 30px; padding-bottom: 7px; }
.dim { color: #858585; }
.combo { display: grid; align-items: center; height: 23px; border: 1px solid #a8a8a8; border-radius: 3px; background: linear-gradient(#fff, #f0f0f0); }
.combo select, .combo > svg { grid-area: 1 / 1; }
.combo select { appearance: none; width: 100%; height: 100%; padding: 0 3px; border: 0; background: none; opacity: 1; }
.combo > svg { justify-self: end; width: 8px; height: 5px; margin-right: 7px; color: #505050; pointer-events: none; }
.combo.full { flex: 1; }
.combo.small { width: 72px; height: 22px; color: #858585; }
.combo.small > svg { color: #999; }
.help { width: 35px; height: 20px; margin-left: auto; border: 1px solid #a8a8a8; border-radius: 3px; background: linear-gradient(#fff, #f0f0f0); }

.status { display: flex; align-items: center; flex: none; height: 28px; padding: 0 1px 0 4px; }
.status > * { flex: none; }
.locator { display: flex; align-items: center; width: 200px; height: 22px; padding: 0 7px; gap: 7px; border: 1px solid #a0a0a0; border-radius: 3px; background: #fff; }
.locator svg { width: 14px; height: 14px; }
.locator input { flex: 1; min-width: 0; padding: 0; border: 0; background: none; font-style: italic; }
.locator input::placeholder { color: #b4b4b4; }
.clip { display: flex; justify-content: center; overflow: hidden; }
.w-iden { width: 24px; margin: 0 7px 0 6px; }
.w-coord { width: 32px; margin-right: 4px; }
.box, .spin { height: 21px; border: 1px solid #a0a0a0; border-radius: 3px; background: #fff; }
.coord { width: 88px; padding: 0 5px; }
.extent { width: 16px; height: 16px; margin: 0 13px 0 4px; }
.w-scale { width: 6px; margin-right: 1px; }
.scale { width: 81px; height: 21px; background: linear-gradient(90deg, #fff 60px, #b0b0b0 60px 61px, #f6f6f6 61px); }
.lock { width: 12px; height: 16px; margin: 0 9px 0 12px; }
.w-mag { width: 23px; margin-right: 2px; }
.spin { display: flex; }
.spin input { flex: 1; min-width: 0; padding: 0 4px; border: 0; background: none; }
.spin > span { display: grid; width: 14px; border-left: 1px solid #b0b0b0; }
.spin b { display: grid; place-items: center; }
.magn { width: 88px; }
.w-rot { width: 22px; margin: 0 7px 0 9px; }
.rot { width: 84px; }
.render { display: flex; align-items: center; gap: 4px; width: 60px; margin: 0 11px 0 6px; }
.crs { display: flex; align-items: center; gap: 3px; width: 74px; white-space: nowrap; }
.crs svg { flex: none; width: 16px; height: 16px; }
.bubble { width: 17px; height: 16px; margin-left: 18px; }
.bubble svg { display: block; }
.sizegrip { align-self: flex-end; width: 12px; height: 12px; margin-left: auto; background: radial-gradient(circle, #999 0 0.600px, transparent 1px) 0 0 / 4px 4px; clip-path: polygon(100% 0, 100% 100%, 0 100%); }

.ico-a { font: 12px "Open Sans", sans-serif; fill: #444; }
.ico-n { font: 700 8px "Open Sans", sans-serif; fill: #555; }
.ico-i { font: italic 700 14px "Liberation Serif", serif; fill: #fff; }
.ico-is { font: italic 700 11px "Liberation Serif", serif; fill: #fff; }
.ico-abc { font: 700 7px "DejaVu Sans", sans-serif; fill: #333; }
.ico-abc.red { fill: #e01010; }
.ico-q { font: 700 15px "Liberation Serif", serif; fill: #fff; }
.t-yel { fill: #fce94f; stroke: #c4a000; }
.t-blu { fill: #d4e8fc; stroke: #4a90d9; }
.t-red { fill: #fff; stroke: #f01010; stroke-width: 1.500; }
.t-off { fill: #dcd9b8; stroke: #88856c; }
```
FILE: map.js
```js
// Builds a village-like mesh: an irregular Voronoi diagram clipped to the district outline.
const COAST = "258,304 263,301 272,298 275,309 283,309 285,301 290,298 289,293 277,292 279,280 278,277 268,275 268,268 276,265 277,261 272,258 273,254 277,252 271,245 268,232 281,232 283,230 293,229 295,218 309,214 310,200 318,198 323,197 321,187 333,187 333,200 341,198 345,184 349,190 351,197 357,198 359,206 367,208 369,196 376,192 373,181 382,182 391,177 393,165 599,165 598,170 593,180 607,186 605,195 583,202 577,204 576,217 577,223 575,233 587,240 589,246 597,239 602,244 615,241 617,251 635,252 642,256 641,264 630,260 621,272 610,276 593,272 594,280 599,285 597,295 583,297 577,293 577,307 574,316 577,318 567,328 558,333 562,338 556,343 553,352 558,358 577,364 585,375 589,392 585,398 581,415 579,435 580,442 583,454 573,456 572,472 582,473 580,482 568,487 574,493 582,491 577,501 579,508 567,513 567,528 555,530 552,536 540,536 533,539 518,540 530,558 545,562 567,568 575,566 595,568 607,576 615,577 615,589 605,587 598,597 588,597 587,607 593,608 588,612 587,635 592,639 589,645 591,653 588,658 593,672 255,672 255,304";
let seed = 71;
const rnd = () => (seed = (seed * 16807) % 2147483647) / 2147483647;

const coast = COAST.split(" ").map(p => p.split(",").map(Number));
const outline = coast.flatMap((p, i) => {
  const q = coast[(i + 1) % coast.length];
  const n = Math.max(1, Math.round(Math.hypot(q[0] - p[0], q[1] - p[1]) / 4));
  return Array.from({ length: n }, (_, k) => k
    ? [p[0] + (q[0] - p[0]) * k / n + rnd() * 2.4 - 1.2, p[1] + (q[1] - p[1]) * k / n + rnd() * 2.4 - 1.2]
    : p);
}).map(p => p.map(v => v.toFixed(1)).join(",")).join(" ");

const sites = [[475, 367, 26], [507, 632, 26], [538, 205, 22], [341, 565, 22], [431, 469, 22], [487, 240, 20], [441, 307, 20], [310, 327, 20], [340, 399, 20], [270, 431, 20], [503, 588, 20], [540, 475, 20], [378, 299, 16], [412, 470, 18], [518, 382, 20]].map(([x, y, r]) => ({ x, y, r }));
for (let n = 0; n < 12000; n++) {
  const x = 248 + rnd() * 405, y = 158 + rnd() * 520;
  const r = 2.6 + Math.pow(rnd(), 2) * 16;
  if (sites.every(s => Math.hypot(s.x - x, s.y - y) > (s.r + r) / 2)) sites.push({ x, y, r });
}

function cell(site) {
  let poly = [[-30, -30], [30, -30], [30, 30], [-30, 30]].map(([a, b]) => [site.x + a, site.y + b]);
  for (const o of sites) {
    const dx = o.x - site.x, dy = o.y - site.y, d = dx * dx + dy * dy;
    if (!d || d > 3600) continue;
    // Larger sites push the shared border outward (power diagram).
    const c = (o.x * o.x + o.y * o.y - site.x * site.x - site.y * site.y + (site.r * site.r - o.r * o.r) / 4) / 2;
    const side = p => p[0] * dx + p[1] * dy - c;
    const out = [];
    poly.forEach((p, i) => {
      const q = poly[(i + 1) % poly.length], a = side(p), b = side(q);
      if (a <= 0) out.push(p);
      if (a * b < 0) { const t = a / (a - b); out.push([p[0] + (q[0] - p[0]) * t, p[1] + (q[1] - p[1]) * t]); }
    });
    poly = out;
  }
  return poly;
}

// Smooth displacement keeps shared corners together while breaking up straight edges.
const warp = ([x, y]) => [x + 1.3 * Math.sin(y * 0.7 + x * 0.3) + 0.8 * Math.sin(x * 0.6), y + 1.3 * Math.sin(x * 0.65 - y * 0.25) + 0.8 * Math.sin(y * 0.6)];
let d = "";
for (const s of sites) {
  const p = cell(s);
  p.forEach((a, i) => {
    const b = p[(i + 1) % p.length];
    // Each shared edge is drawn once; a few are left out so that neighbours merge into concave shapes.
    if (a[0] > b[0] || rnd() < 0.04) return;
    const m = [(a[0] + b[0]) / 2, (a[1] + b[1]) / 2];
    d += "M" + [a, m, b].map(v => warp(v).map(k => k.toFixed(1)).join(" ")).join("L");
  });
}
document.getElementById("map").innerHTML =
  `<clipPath id="land"><polygon points="${outline}"/></clipPath>` +
  `<polygon class="land" points="${outline}"/><path class="cells" clip-path="url(#land)" d="${d}"/>` +
  `<polygon class="cells" points="${outline}"/>` +
  `<path class="picked" d="M418.500 366l11-.5 4 4 6 4-3 7-8 3-2 3-5-.5-1-11z"/>`;
```
